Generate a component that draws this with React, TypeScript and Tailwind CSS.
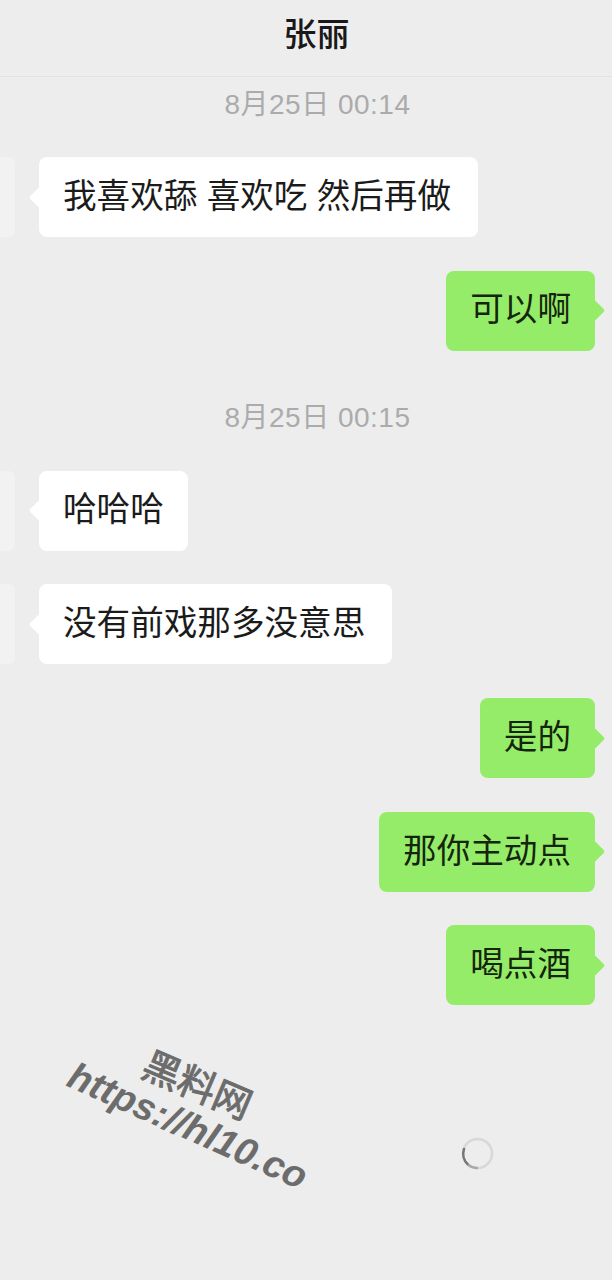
const CJK = "font-['Liberation_Sans','Noto_Sans_CJK_SC',sans-serif]";

function TimeLabel({ text, className }: { text: string; className: string }) {
  return (
    <div className={`flex h-[54px] items-center justify-center pl-[23px] pt-[2px] text-[28px] tracking-[0.5px] text-[#ababab] ${className}`}>
      {text}
    </div>
  );
}

function Incoming({ text, className, width = "" }: { text: string; className: string; width?: string }) {
  return (
    <div className={`flex h-20 items-stretch ${className}`}>
      <div className="w-[15px] rounded-r-md bg-[#f2f2f2]" />
      <div className={`relative ml-6 flex items-center rounded-lg bg-white pl-6 pr-[24px] text-[33.6px] text-[#1b1b1b] whitespace-pre ${width}`}>
        <span className="absolute -left-[7px] top-[32.5px] h-[15px] w-[15px] rotate-45 rounded-[2px] bg-white" />
        <span className="relative">{text}</span>
      </div>
    </div>
  );
}

function Outgoing({ text, className }: { text: string; className: string }) {
  return (
    <div className={`flex h-20 justify-end pr-[17px] ${className}`}>
      <div className="relative flex items-center rounded-lg bg-[#95ec69] pl-6 pr-[24px] text-[33.6px] text-[#14250c]">
        <span className="absolute -right-[7px] top-[32.5px] h-[15px] w-[15px] rotate-45 rounded-[2px] bg-[#95ec69]" />
        <span className="relative">{text}</span>
      </div>
    </div>
  );
}

export default function App() {
  return (
    <div className={`relative h-[1280px] w-[612px] overflow-hidden bg-[#ededed] ${CJK}`}>
      <header className="flex h-[77px] items-center justify-center border-b border-[#e2e2e2] pb-[6px] pl-[21px] text-[33px] font-medium text-[#191919]">
        张丽
      </header>

      <TimeLabel text="8月25日 00:14" className="" />
      <Incoming text="我喜欢舔 喜欢吃 然后再做" className="mt-[26px]" width="w-[439px]" />
      <Outgoing text="可以啊" className="mt-[33.7px]" />

      <TimeLabel text="8月25日 00:15" className="mt-[39px]" />
      <Incoming text="哈哈哈" className="mt-[27px]" />
      <Incoming text="没有前戏那多没意思" className="mt-[33.7px]" width="w-[353px]" />
      <Outgoing text="是的" className="mt-[33.7px]" />
      <Outgoing text="那你主动点" className="mt-[33.7px]" />
      <Outgoing text="喝点酒" className="mt-[33.7px]" />

      {/* site watermark, tilted over the page */}
      <div className="absolute left-[152px] top-[1046px] origin-top-left rotate-[23deg] text-[38px] leading-none text-[#6c6c6c] [-webkit-text-stroke:1px_#6c6c6c]">
        黑料网
      </div>
      <div className="absolute left-[78px] top-[1056px] origin-top-left rotate-[24deg] text-[38px] leading-none font-bold italic whitespace-nowrap text-[#6c6c6c]">
        https://hl10.co
      </div>

      {/* loading spinner */}
      <svg className="absolute left-[461px] top-[1137px]" width="33" height="33" viewBox="0 0 33 33" fill="none">
        <circle cx="16.5" cy="16.5" r="14.5" stroke="#d8d8d8" strokeWidth="2.5" />
        <path d="M3 12A14.5 14.5 0 0 0 7 27.5" stroke="#757575" strokeWidth="2.5" strokeLinecap="round" />
        <path d="M7 27.5A14.5 14.5 0 0 0 17 31" stroke="#a8a8a8" strokeWidth="2.5" />
      </svg>
    </div>
  );
}
